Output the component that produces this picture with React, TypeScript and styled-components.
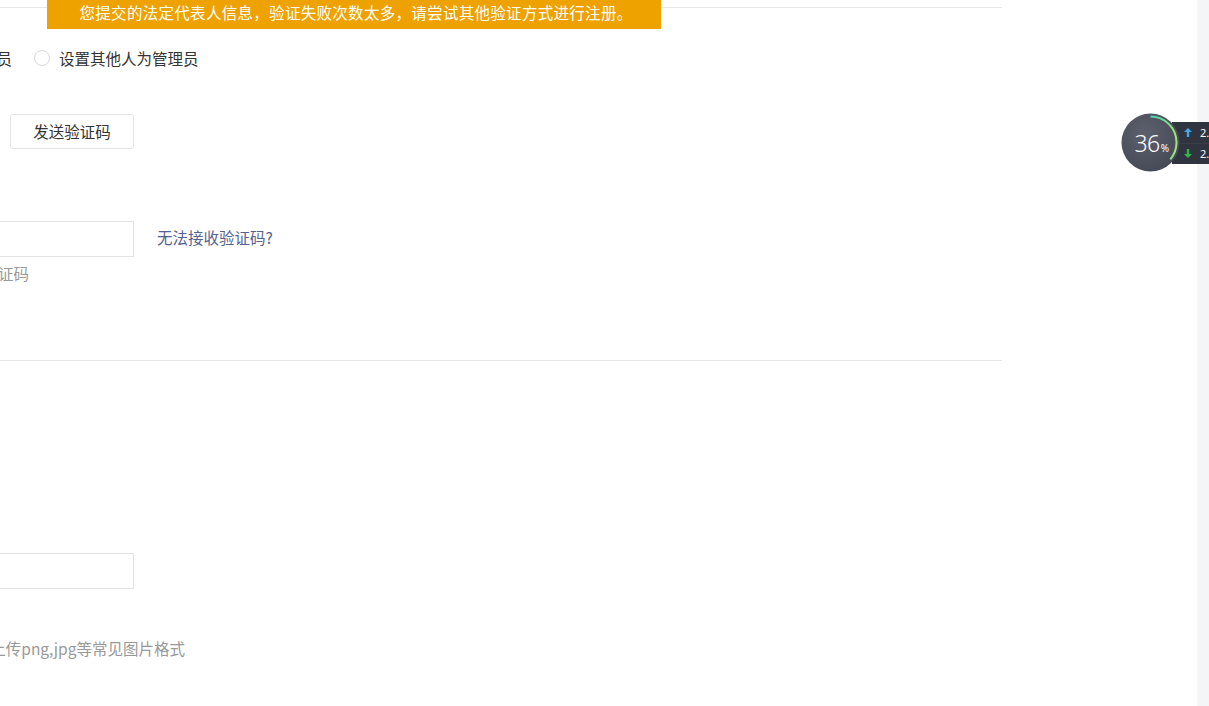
import React from 'react';
import styled, { createGlobalStyle } from 'styled-components';

const GlobalStyle = createGlobalStyle`
  html, body {
    margin: 0;
    padding: 0;
    background: #fff;
    font-family: "Microsoft YaHei", "Noto Sans CJK SC", "Noto Sans", sans-serif;
    color: #333;
    overflow: hidden;
  }
  *, *::before, *::after {
    box-sizing: border-box;
  }
`;

const Page = styled.div`
  display: flex;
  width: 1209px;
  height: 706px;
  position: relative;
  overflow: hidden;
`;

const Content = styled.div`
  flex: 1;
  position: relative;
  overflow: hidden;
`;

const Scrollbar = styled.div`
  width: 12px;
  background: #f4f5f7;
`;

const Form = styled.div`
  width: 1002px;
`;

const TopRule = styled.div`
  height: 8px;
  border-bottom: 1px solid #e8e8e8;
`;

const Divider = styled.div<{ $top: number }>`
  height: 1px;
  background: #e6e6e6;
  margin-top: ${(p) => p.$top}px;
`;

const Fields = styled.div`
  margin-left: -126px;
  display: flex;
  flex-direction: column;
`;

const Row = styled.div<{ $top: number }>`
  display: flex;
  align-items: center;
  margin-top: ${(p) => p.$top}px;
  font-size: 15.5px;
  line-height: 20px;
`;

const RadioGroup = styled.div`
  display: flex;
  align-items: center;
  gap: 22px;
  margin-left: -11px;
`;

const RadioOption = styled.label`
  display: flex;
  align-items: center;
  gap: 9px;
  white-space: nowrap;
  color: #333;
`;

const RadioDot = styled.span`
  width: 16px;
  height: 16px;
  border: 1px solid #d9d9d9;
  border-radius: 50%;
  background: #fff;
`;

const Input = styled.div<{ $width: number }>`
  width: ${(p) => p.$width}px;
  height: 36px;
  border: 1px solid #e3e3e3;
  background: #fff;
  flex-shrink: 0;
`;

const Button = styled.button`
  height: 35px;
  width: 124px;
  margin-left: 16px;
  border: 1px solid #e5e5e5;
  border-radius: 3px;
  background: #fff;
  font-family: inherit;
  font-size: 15.5px;
  color: #333;
  padding: 0;
`;

const Link = styled.a`
  margin-left: 23px;
  margin-bottom: 4px;
  color: #56618f;
  font-size: 15.5px;
  white-space: nowrap;
`;

const Hint = styled.div<{ $top: number }>`
  margin-top: ${(p) => p.$top}px;
  font-size: 15.5px;
  line-height: 20px;
  color: #999;
  white-space: nowrap;
`;

const Toast = styled.div`
  position: absolute;
  top: 0;
  left: 47px;
  width: 614px;
  height: 29px;
  background: #eda200;
  color: #fff;
  font-size: 15.5px;
  letter-spacing: 0.3px;
  line-height: 25px;
  text-align: center;
  white-space: nowrap;
  padding-left: 4px;
`;

const Monitor = styled.div`
  position: absolute;
  left: 1121px;
  top: 113px;
  width: 120px;
  height: 60px;
`;

const Gauge = styled.div`
  position: absolute;
  left: 0;
  top: 0;
  width: 59px;
  height: 59px;
  z-index: 2;
`;

const GaugeText = styled.div`
  position: absolute;
  inset: 0;
  display: flex;
  align-items: center;
  justify-content: center;
  color: #fff;
  font-family: "Noto Sans", "DejaVu Sans", sans-serif;
  font-weight: 300;
  font-size: 23px;
  letter-spacing: -0.5px;
  padding-left: 2px;
  padding-top: 1px;

  small {
    font-size: 10px;
    margin-top: 9px;
    margin-left: 1px;
    font-weight: 400;
  }
`;

const SpeedPanel = styled.div`
  position: absolute;
  left: 51px;
  top: 9px;
  width: 70px;
  height: 42px;
  background: #30343e;
  display: flex;
  flex-direction: column;
  z-index: 1;
`;

const SpeedRow = styled.div<{ $color: string }>`
  flex: 1;
  display: flex;
  align-items: center;
  padding-left: 12px;
  gap: 8px;
  color: #fff;
  font-family: "Noto Sans", "DejaVu Sans", sans-serif;
  font-size: 11px;

  & + & {
    border-top: 1px solid #3a3e48;
  }

  svg {
    color: ${(p) => p.$color};
  }
`;

const Arrow = ({ down }: { down?: boolean }) => (
  <svg width="8" height="9" viewBox="0 0 8 9" style={{ transform: down ? 'rotate(180deg)' : undefined }}>
    <path d="M4 0 L8 4 H5.2 V9 H2.8 V4 H0 Z" fill="currentColor" />
  </svg>
);

const GaugeRing = () => {
  const r = 26;
  const c = 2 * Math.PI * r;
  const pct = 0.36;
  return (
    <svg width="59" height="59" viewBox="0 0 59 59">
      <defs>
        <radialGradient id="gbg" cx="40%" cy="35%" r="70%">
          <stop offset="0%" stopColor="#5d616e" />
          <stop offset="100%" stopColor="#454955" />
        </radialGradient>
        <linearGradient id="garc" x1="0" y1="0" x2="0" y2="1">
          <stop offset="0%" stopColor="#22cfcf" />
          <stop offset="60%" stopColor="#4fd9a8" />
          <stop offset="100%" stopColor="#a6e27a" />
        </linearGradient>
      </defs>
      <circle cx="29.5" cy="29.5" r="29" fill="url(#gbg)" />
      <circle
        cx="29.5"
        cy="29.5"
        r={r}
        fill="none"
        stroke="url(#garc)"
        strokeWidth="2"
        strokeDasharray={`${c * pct} ${c}`}
        transform="rotate(-90 29.5 29.5)"
      />
    </svg>
  );
};

export default function App() {
  return (
    <>
      <GlobalStyle />
      <Page>
        <Content>
          <Form>
            <TopRule />
            <Fields>
              <Row $top={40}>
                <RadioGroup>
                  <RadioOption>
                    <RadioDot />
                    设置自己为管理员
                  </RadioOption>
                  <RadioOption>
                    <RadioDot />
                    设置其他人为管理员
                  </RadioOption>
                </RadioGroup>
              </Row>
              <Row $top={45}>
                <Input $width={120} />
                <Button>发送验证码</Button>
              </Row>
              <Row $top={72}>
                <Input $width={260} />
                <Link>无法接收验证码?</Link>
              </Row>
              <Hint $top={6}>请输入手机收到验证码</Hint>
            </Fields>
            <Divider $top={77} />
            <Fields>
              <Row $top={192}>
                <Input $width={260} />
              </Row>
              <Hint $top={49}>请上传营业执照, 上传png,jpg等常见图片格式</Hint>
            </Fields>
          </Form>
          <Toast>您提交的法定代表人信息，验证失败次数太多，请尝试其他验证方式进行注册。</Toast>
        </Content>
        <Scrollbar />
        <Monitor>
          <SpeedPanel>
            <SpeedRow $color="#43a7f0">
              <Arrow />
              2.
            </SpeedRow>
            <SpeedRow $color="#2fb54e">
              <Arrow down />
              2.
            </SpeedRow>
          </SpeedPanel>
          <Gauge>
            <GaugeRing />
            <GaugeText>
              36<small>%</small>
            </GaugeText>
          </Gauge>
        </Monitor>
      </Page>
    </>
  );
}
